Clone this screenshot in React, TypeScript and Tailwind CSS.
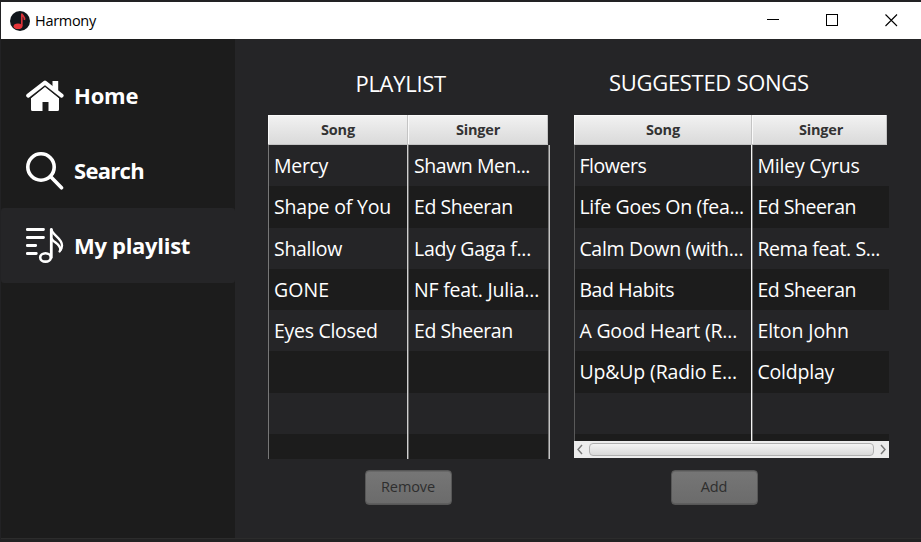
import React from "react";

type Row = { song: string; singer: string; songTrack?: string; singerTrack?: string };

const ROW_HEIGHTS = ["h-[41px]", "h-[42px]", "h-[41px]", "h-[41px]", "h-[41px]", "h-[42px]", "h-[41px]", "h-[25px]"];

const PLAYLIST: Row[] = [
  { song: "Mercy", singer: "Shawn Men...", singerTrack: "tracking-[-0.45px]" },
  { song: "Shape of You", singer: "Ed Sheeran", songTrack: "tracking-[-0.2px]", singerTrack: "tracking-[-0.45px]" },
  { song: "Shallow", singer: "Lady Gaga f..." },
  { song: "GONE", singer: "NF feat. Julia...", songTrack: "tracking-[0.1px]", singerTrack: "tracking-[-0.2px]" },
  { song: "Eyes Closed", singer: "Ed Sheeran", singerTrack: "tracking-[-0.45px]" },
];

const SUGGESTED: Row[] = [
  { song: "Flowers", singer: "Miley Cyrus", songTrack: "tracking-[-0.45px]", singerTrack: "tracking-[-0.2px]" },
  { song: "Life Goes On (fea...", singer: "Ed Sheeran", singerTrack: "tracking-[-0.45px]" },
  { song: "Calm Down (with...", singer: "Rema feat. S...", singerTrack: "tracking-[-0.4px]" },
  { song: "Bad Habits", singer: "Ed Sheeran", songTrack: "tracking-[-0.4px]", singerTrack: "tracking-[-0.45px]" },
  { song: "A Good Heart (R...", singer: "Elton John", songTrack: "tracking-[-0.2px]", singerTrack: "tracking-[-0.1px]" },
  { song: "Up&Up (Radio E...", singer: "Coldplay", songTrack: "tracking-[-0.15px]", singerTrack: "tracking-[-0.2px]" },
];

function AppIcon() {
  return (
    <svg className="h-5 w-5 shrink-0" viewBox="0 0 20 20">
      <circle cx="10" cy="10" r="10" fill="#11171c" />
      <ellipse cx="8" cy="15.2" rx="4.4" ry="2.8" fill="#e5353a" />
      <path d="M11.8 15V2.6c.5 2.4 3.4 2.8 2.6 6.4" fill="none" stroke="#d9343a" strokeWidth="1.7" />
    </svg>
  );
}

function HomeIcon() {
  return (
    <svg className="h-[38px] w-[38px]" viewBox="0 0 38 38">
      <path d="M19 9.5 33 21V32.5q0 1.5-1.5 1.5H22.5v-9h-6v9H6.5Q5 34 5 32.5V21z" fill="#fff" />
      <path d="M2.8 19.2 19 6.2l16.2 13" fill="none" stroke="#1c1c1c" strokeWidth="5.6" />
      <path d="M26.5 4h5.7v13l-5.7-4.5z" fill="#fff" />
      <path d="M2.2 18.6 19 5.6l16.6 13" fill="none" stroke="#fff" strokeWidth="4" strokeLinecap="round" strokeLinejoin="round" />
    </svg>
  );
}

function SearchIcon() {
  return (
    <svg className="h-[38px] w-[38px]" viewBox="0 0 38 38" fill="none" stroke="#fff" strokeLinecap="round">
      <circle cx="15" cy="15" r="13.2" strokeWidth="3.6" />
      <path d="m25 25 10.5 10.8" strokeWidth="3.6" />
    </svg>
  );
}

function PlaylistIcon() {
  return (
    <svg className="h-[38px] w-[38px]" viewBox="0 0 38 38" fill="none" stroke="#fff" strokeLinecap="round" strokeLinejoin="round">
      <path d="M1.3 2.5h16.2M1.3 10.5h16.2M1.3 18.5h8.4M1.3 26.5h9" strokeWidth="2.8" />
      <ellipse cx="19.5" cy="30.4" rx="5.3" ry="4.2" strokeWidth="2.6" />
      <path d="M25.3 30.5V2.5" strokeWidth="2.8" />
      <path d="M25.6 3C27.5 9 36 11 36 18.5c0 2.5-1 4.5-2.4 5.9" strokeWidth="2.4" />
      <path d="M25.8 12c2.2 4 8.6 4.5 8.6 11" strokeWidth="2.4" />
    </svg>
  );
}

function NavItem({ icon, label, active, track }: { icon: React.ReactNode; label: string; active?: boolean; track: string }) {
  return (
    <div className={`flex h-[75px] items-center rounded-[3px] pl-[25px] ${active ? "bg-[#252527]" : ""}`}>
      {icon}
      <span className={`ml-[10px] pb-[2px] text-[22px] leading-[30px] font-bold text-white ${track}`}>{label}</span>
    </div>
  );
}

function HeaderCell({ label, className }: { label: string; className: string }) {
  return (
    <div
      className={`flex h-[30px] items-center justify-center border-r border-b border-[#c4c4c4] bg-linear-to-b from-[#f2f2f2] to-[#dadada] text-[14.5px] font-bold tracking-[-0.2px] text-[#333] shadow-[inset_1px_1px_0_#fafafa] ${className}`}
    >
      {label}
    </div>
  );
}

type RowsProps = { rows: Row[]; firstCol: string; left: string; divider: string; pad: string; rightEdge: string };

function Rows({ rows, firstCol, left, divider, pad, rightEdge }: RowsProps) {
  return (
    <>
      {ROW_HEIGHTS.map((h, i) => (
        <div
          key={i}
          className={`flex shrink-0 text-[19.5px] leading-[42px] whitespace-nowrap text-white ${h} ${i % 2 ? "bg-[#1c1c1c]" : "bg-[#252527]"}`}
        >
          <div className={`border-l ${pad} ${left} ${firstCol} ${rows[i]?.songTrack ?? "tracking-[-0.3px]"}`}>{rows[i]?.song}</div>
          <div className={`w-px ${divider}`} />
          <div className={`flex-1 border-l border-[#6a6a6a] ${pad} ${rightEdge} ${rows[i]?.singerTrack ?? "tracking-[-0.3px]"}`}>
            {rows[i]?.singer}
          </div>
        </div>
      ))}
    </>
  );
}

function ActionButton({ label }: { label: string }) {
  return (
    <button className="h-[35px] w-[87px] rounded-[4px] border border-[#575757] bg-linear-to-b from-[#767676] to-[#6b6b6b] pr-px pb-[2px] text-[14.5px] tracking-[-0.1px] text-[#2e2e2e] shadow-[inset_0_1px_0_#686868,inset_0_-1px_0_#5e5e5e]">
      {label}
    </button>
  );
}

function ScrollBar() {
  return (
    <div className="flex h-[17px] w-[315px] shrink-0 items-center justify-between bg-[#ececec] px-[3px]">
      <svg className="h-[11px] w-[6px]" viewBox="0 0 6 11" fill="none" stroke="#777" strokeWidth="1.4">
        <path d="M5 1 1 5.5 5 10" />
      </svg>
      <div className="h-[13px] w-[285px] rounded-[4px] border border-[#b0b0b0] bg-linear-to-b from-[#f4f4f4] to-[#d8d8d8]" />
      <svg className="h-[11px] w-[6px]" viewBox="0 0 6 11" fill="none" stroke="#777" strokeWidth="1.4">
        <path d="m1 1 4 4.5L1 10" />
      </svg>
    </div>
  );
}

export default function App() {
  return (
    <div className="flex h-[542px] w-[921px] flex-col overflow-hidden bg-[#222224] pt-[2px] pl-px font-['Open_Sans','Noto_Sans',sans-serif]">
      <header className="flex h-[37px] shrink-0 items-center bg-white pl-[9px]">
        <AppIcon />
        <span className="ml-[5px] text-[14.5px] tracking-[-0.3px] text-black">Harmony</span>
        <div className="ml-auto flex items-center gap-[46px] pr-[23px]">
          <svg className="h-[13px] w-[13px]" viewBox="0 0 13 13" stroke="#000" shapeRendering="crispEdges">
            <path d="M0 5.5h12" />
          </svg>
          <svg className="h-[13px] w-[13px]" viewBox="0 0 13 13" fill="none" stroke="#000" shapeRendering="crispEdges">
            <path d="M.5.5h11v11H.5z" />
          </svg>
          <svg className="h-[13px] w-[13px]" viewBox="0 0 13 13" stroke="#000" strokeWidth="1.1">
            <path d="m.5.5 11.5 11.5M12 .5.5 12" />
          </svg>
        </div>
      </header>

      <div className="flex h-[499px] shrink-0">
        <nav className="w-[234px] shrink-0 bg-[#1c1c1c] pt-[19px]">
          <NavItem icon={<HomeIcon />} label="Home" track="tracking-[-0.2px]" />
          <NavItem icon={<SearchIcon />} label="Search" track="tracking-[-0.7px]" />
          <NavItem icon={<PlaylistIcon />} label="My playlist" active track="tracking-[-0.3px]" />
        </nav>

        <main className="flex flex-1 bg-[#252527] pl-[33px]">
          <section className="flex w-[282px] flex-col">
            <h2 className="h-[76px] pt-[29px] pl-[87.5px] text-[22px] leading-[30px] tracking-[-0.3px] whitespace-nowrap text-white">PLAYLIST</h2>
            <div className="flex w-[280px]">
              <HeaderCell label="Song" className="w-[140px] pl-px" />
              <HeaderCell label="Singer" className="w-[140px] pl-px" />
            </div>
            <div className="flex h-[314px] flex-col overflow-hidden">
              <Rows
                rows={PLAYLIST}
                firstCol="w-[139px]"
                left="border-[#777]"
                divider="bg-[#cfcfcf]"
                pad="pl-[5px]"
                rightEdge="shadow-[inset_-1px_0_0_#c4c4c4,inset_-2px_0_0_#777]"
              />
            </div>
            <div className="mt-[11px] pl-[97px]">
              <ActionButton label="Remove" />
            </div>
          </section>

          <section className="ml-6 flex w-[315px] flex-col">
            <h2 className="h-[76px] pt-[28px] pl-[35px] text-[22px] leading-[30px] tracking-[-0.3px] whitespace-nowrap text-white">SUGGESTED SONGS</h2>
            <div className="flex w-[313px]">
              <HeaderCell label="Song" className="w-[178px] pl-px" />
              <HeaderCell label="Singer" className="w-[135px] pl-[4px]" />
            </div>
            <div className="flex h-[296px] flex-col overflow-hidden">
              <Rows rows={SUGGESTED} firstCol="w-[177px]" left="border-[#5a5a5a]" divider="bg-[#f4f4f4]" pad="pl-[4.4px]" rightEdge="" />
            </div>
            <ScrollBar />
            <div className="mt-3 pl-[97px]">
              <ActionButton label="Add" />
            </div>
          </section>
        </main>
      </div>
      <footer className="h-[4px] border-t border-[#2c2c2c] bg-[#222223]" />
    </div>
  );
}
